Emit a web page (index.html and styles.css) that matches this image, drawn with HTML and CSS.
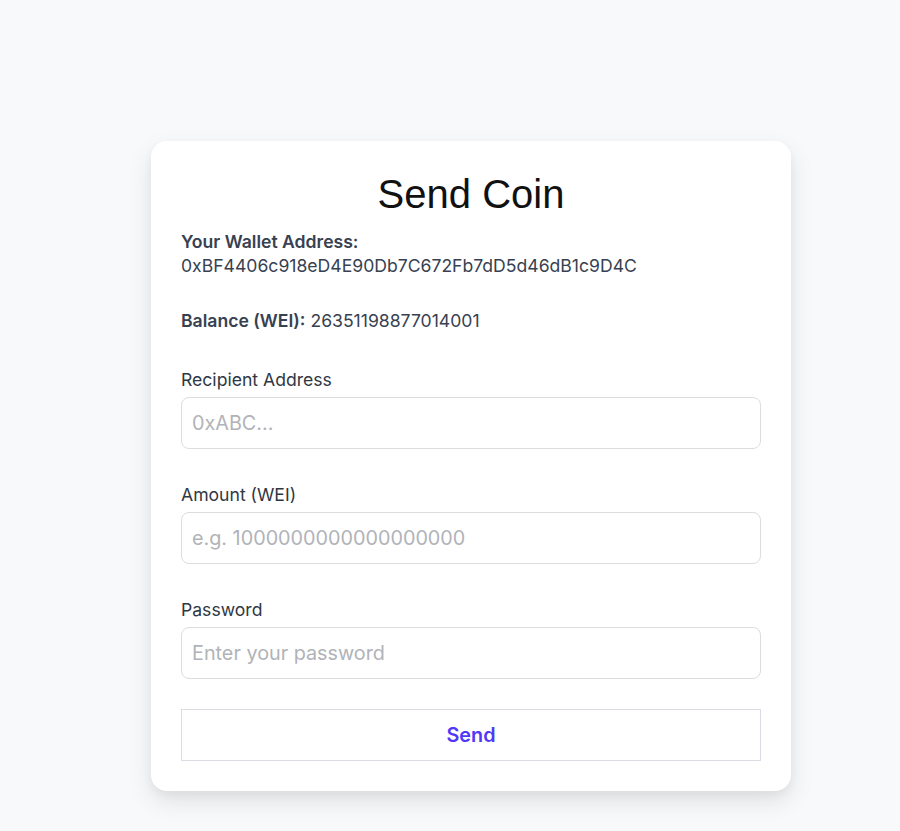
FILE: index.html
```html
<!DOCTYPE html>
<html lang="en">
<head>
<meta charset="utf-8">
<title>Send Coin</title>
<link rel="stylesheet" href="styles.css">
</head>
<body>
<main class="page">
  <section class="card">
    <h1 class="title">Send Coin</h1>
    <div class="info">
      <div class="info-label">Your Wallet Address:</div>
      <div class="info-value">0xBF4406c918eD4E90Db7C672Fb7dD5d46dB1c9D4C</div>
    </div>
    <div class="balance"><strong>Balance (WEI):</strong> 26351198877014001</div>
    <form class="form">
      <label class="field">
        <span class="field-label">Recipient Address</span>
        <input class="input" type="text" placeholder="0xABC...">
      </label>
      <label class="field">
        <span class="field-label">Amount (WEI)</span>
        <input class="input" type="text" placeholder="e.g. 1000000000000000000">
      </label>
      <label class="field">
        <span class="field-label">Password</span>
        <input class="input" type="password" placeholder="Enter your password">
      </label>
      <button class="btn" type="button">Send</button>
    </form>
  </section>
</main>
</body>
</html>
```
FILE: styles.css
```css
* { box-sizing: border-box; }
html, body { margin: 0; padding: 0; }
body {
  background: #f8f9fb;
  font-family: Inter, "Noto Sans", sans-serif;
  color: #374151;
  width: 900px;
  height: 831px;
  overflow: hidden;
}
.page {
  padding: 141px 0 0 151px;
}
.card {
  width: 640px;
  height: 650px;
  background: #fff;
  border-radius: 16px;
  padding: 30px;
  box-shadow: 0 10px 25px rgba(0, 0, 0, 0.10), 0 4px 10px rgba(0, 0, 0, 0.04);
}
.title {
  margin: 0;
  font-family: "Liberation Sans", Arial, sans-serif;
  font-weight: 400;
  font-size: 40px;
  line-height: 46px;
  text-align: center;
  color: #111;
}
.info {
  margin-top: 13px;
  font-size: 17.6px;
  line-height: 24px;
}
.info-label { font-weight: 600; }
.balance {
  margin-top: 31px;
  font-size: 17.6px;
  line-height: 24px;
}
.balance strong { font-weight: 600; }
.form {
  display: flex;
  flex-direction: column;
  gap: 34px;
  margin-top: 35px;
}
.field {
  display: flex;
  flex-direction: column;
  gap: 5px;
}
.field-label {
  font-size: 17.6px;
  line-height: 24px;
  font-weight: 400;
  color: #2f3744;
}
.input {
  height: 52px;
  width: 100%;
  border: 1px solid #dcdde1;
  border-radius: 8px;
  padding: 0 10px;
  font-family: Inter, "Noto Sans", sans-serif;
  font-size: 19.8px;
  color: #374151;
  background: #fff;
  outline: none;
}
.input::placeholder { color: #b1b3b8; }
.btn {
  margin-top: -4px;
  height: 52px;
  width: 100%;
  background: #fff;
  border: 1px solid #dcdce4;
  border-radius: 0;
  font-family: Inter, "Noto Sans", sans-serif;
  font-size: 19.8px;
  font-weight: 600;
  color: #4f39f6;
  cursor: pointer;
}
```
